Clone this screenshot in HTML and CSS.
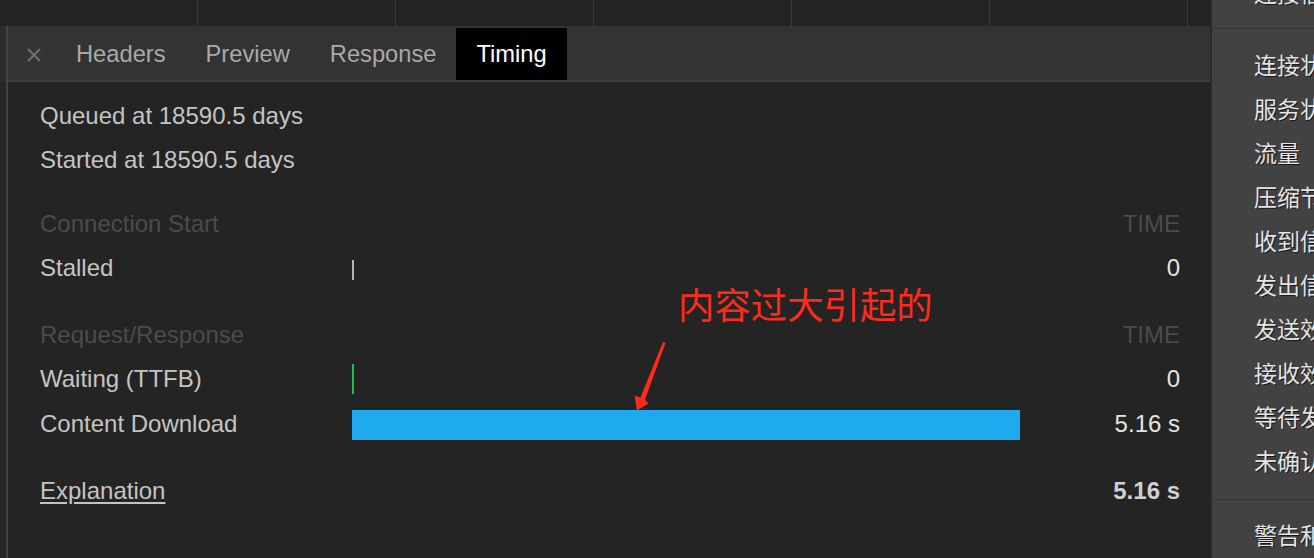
FILE: index.html
```html
<!DOCTYPE html>
<html lang="zh-CN">
<head>
<meta charset="utf-8">
<title>Timing</title>
<link rel="stylesheet" href="styles.css">
</head>
<body>
<div class="app">
  <div class="main">
    <div class="strip">
      <div class="col"></div><div class="col"></div><div class="col"></div>
      <div class="col"></div><div class="col"></div><div class="col"></div>
      <div class="col-last"></div>
    </div>
    <div class="body">
      <div class="gutter"></div>
      <div class="panel">
        <div class="tabbar">
          <div class="close">
            <svg width="14" height="14" viewBox="0 0 14 14"><path d="M1 1 L13 13 M13 1 L1 13" stroke="#707070" stroke-width="2" fill="none"/></svg>
          </div>
          <div class="tab">Headers</div>
          <div class="tab">Preview</div>
          <div class="tab">Response</div>
          <div class="tab active">Timing</div>
        </div>
        <div class="content">
          <div class="line">Queued at 18590.5 days</div>
          <div class="line">Started at 18590.5 days</div>

          <div class="sec sec1">
            <div class="row">
              <div class="label head">Connection Start</div>
              <div class="bar"></div>
              <div class="value head">TIME</div>
            </div>
            <div class="row">
              <div class="label">Stalled</div>
              <div class="bar"><span class="mark stalled"></span></div>
              <div class="value num">0</div>
            </div>
          </div>

          <div class="sec sec2">
            <div class="row">
              <div class="label head">Request/Response</div>
              <div class="bar"></div>
              <div class="value head">TIME</div>
            </div>
            <div class="row">
              <div class="label">Waiting (TTFB)</div>
              <div class="bar"><span class="mark ttfb"></span></div>
              <div class="value num">0</div>
            </div>
            <div class="row row-dl">
              <div class="label">Content Download</div>
              <div class="bar"><span class="mark download"></span></div>
              <div class="value num">5.16 s</div>
            </div>
          </div>

          <div class="sec sec3">
            <div class="row">
              <div class="label"><a class="link">Explanation</a></div>
              <div class="bar"></div>
              <div class="value total">5.16 s</div>
            </div>
          </div>
        </div>
      </div>
    </div>
  </div>
  <div class="side">
    <div class="side-head"><div class="side-item">连接信息</div></div>
    <div class="side-list">
      <div class="side-item">连接状态</div>
      <div class="side-item">服务状态</div>
      <div class="side-item">流量</div>
      <div class="side-item">压缩节省</div>
      <div class="side-item">收到信息</div>
      <div class="side-item">发出信息</div>
      <div class="side-item">发送效率</div>
      <div class="side-item">接收效率</div>
      <div class="side-item">等待发送</div>
      <div class="side-item">未确认</div>
    </div>
    <div class="side-list side-list2">
      <div class="side-item">警告和错误</div>
    </div>
  </div>

  <div class="note">内容过大引起的</div>
  <svg class="arrow" width="60" height="90" viewBox="620 330 60 90">
    <polygon points="663,342 665.5,343 645,399.5 648.5,403.5 637,410.5 634.5,395.5 640.5,397.5" fill="#ff2a1c"/>
  </svg>
</div>
</body>
</html>
```

FILE: styles.css
```css
* { box-sizing: border-box; }

html, body {
  margin: 0;
  padding: 0;
  background: #242424;
}

body {
  font-family: "Liberation Sans", Arial, Helvetica, sans-serif;
  color: #c2c2c2;
  width: 1314px;
  height: 558px;
  overflow: hidden;
}

.app {
  position: relative;
  display: flex;
  width: 1314px;
  height: 558px;
}

.main {
  flex: 0 0 1210px;
  display: flex;
  flex-direction: column;
  background: #242424;
}

/* network table strip at top */
.strip {
  display: flex;
  height: 26px;
  background: #242424;
}
.col {
  flex: 0 0 198px;
  border-right: 1px solid #3a3a3a;
}
.col-last { flex: 1; }

.body {
  flex: 1;
  display: flex;
}

.gutter {
  flex: 0 0 8px;
  background: linear-gradient(#2c2c2c 0 56px, #262626 56px);
  border-right: 2px solid #434343;
}

.panel {
  flex: 1;
  display: flex;
  flex-direction: column;
}

/* tabs */
.tabbar {
  display: flex;
  height: 56px;
  padding-top: 2px;
  background: #333333;
  border-bottom: 2px solid #3d3d3d;
}
.close {
  width: 48px;
  display: flex;
  align-items: center;
  padding-left: 19px;
}
.close svg { display: block; margin-top: 1px; }
.tab {
  display: flex;
  align-items: center;
  padding: 0 20px;
  font-size: 23.7px;
  color: #a9a9a9;
}
.tab.active {
  background: #000000;
  color: #ffffff;
  padding: 0 20px 0 20px;
}

/* timing content */
.content {
  padding: 12px 30px 0 32px;
}
.line {
  height: 44px;
  line-height: 44px;
  font-size: 24px;
  color: #c4c4c4;
}

.sec1 { margin-top: 20px; }
.sec2 { margin-top: 23px; }
.sec3 { margin-top: 23px; }

.row {
  display: grid;
  grid-template-columns: 312px 668px 160px;
  height: 44px;
  font-size: 24px;
  line-height: 44px;
}
.row-dl { margin-top: 1px; }

.label { color: #c4c4c4; white-space: nowrap; }
.head { color: #4b4b4b; }
.value { text-align: right; white-space: nowrap; }
.num { color: #e4e4e4; }
.total { color: #d0d0d0; font-weight: bold; }

.bar {
  display: flex;
  align-items: center;
}
.mark { display: block; }
.stalled {
  width: 2px;
  height: 20px;
  background: #b4b4b4;
  margin-top: 4px;
}
.ttfb {
  width: 2px;
  height: 30px;
  background: #1fbf55;
  margin-top: 0;
}
.download {
  width: 668px;
  height: 30px;
  background: #1fa9ee;
  margin-top: 2px;
}

.link {
  color: #c4c4c4;
  text-decoration: underline;
  text-underline-offset: 3px;
}

/* right side panel */
.side {
  flex: 0 0 104px;
  background: #424242;
  border-left: 2px solid #2a2a2a;
  overflow: hidden;
  font-family: "Noto Sans CJK SC", "Liberation Sans", sans-serif;
  font-size: 23px;
  color: #e4e4e4;
}
.side-item {
  height: 44px;
  line-height: 44px;
  padding-left: 42px;
  white-space: nowrap;
  text-shadow: 1px 1px 0 rgba(0, 0, 0, 0.65);
}
.side-head {
  height: 29px;
  overflow: hidden;
  border-bottom: 1px solid #383838;
}
.side-head .side-item { margin-top: -30px; }
.side-list {
  padding: 13px 0 17px;
  border-bottom: 1px solid #383838;
}
.side-list2 {
  padding-top: 12px;
  border-bottom: 0;
}

/* annotation overlay */
.note {
  position: absolute;
  left: 678px;
  top: 283px;
  font-family: "Noto Sans CJK SC", sans-serif;
  font-size: 36.4px;
  line-height: 40px;
  color: #ff2a1c;
  white-space: nowrap;
}
.arrow {
  position: absolute;
  left: 620px;
  top: 330px;
}
```
